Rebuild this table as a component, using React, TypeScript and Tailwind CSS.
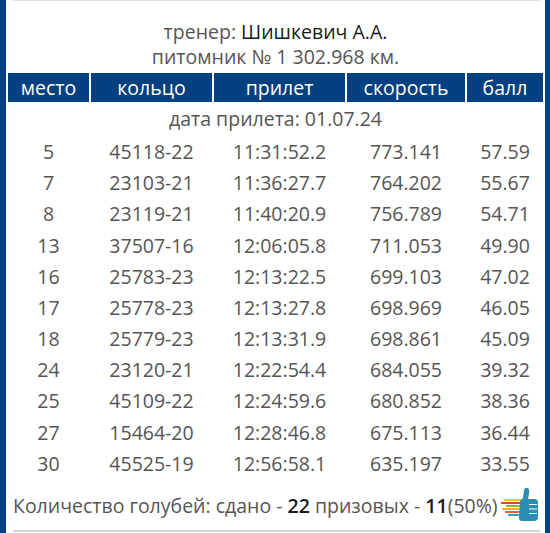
const COLS = ['место', 'кольцо', 'прилет', 'скорость', 'балл'];
const WIDTHS = ['w-[81px]', 'w-[121px]', 'w-[131px]', 'w-[118px]', 'w-[76px]'];

const ROWS = [
    ['5', '45118-22', '11:31:52.2', '773.141', '57.59'],
    ['7', '23103-21', '11:36:27.7', '764.202', '55.67'],
    ['8', '23119-21', '11:40:20.9', '756.789', '54.71'],
    ['13', '37507-16', '12:06:05.8', '711.053', '49.90'],
    ['16', '25783-23', '12:13:22.5', '699.103', '47.02'],
    ['17', '25778-23', '12:13:27.8', '698.969', '46.05'],
    ['18', '25779-23', '12:13:31.9', '698.861', '45.09'],
    ['24', '23120-21', '12:22:54.4', '684.055', '39.32'],
    ['25', '45109-22', '12:24:59.6', '680.852', '38.36'],
    ['27', '15464-20', '12:28:46.8', '675.113', '36.44'],
    ['30', '45525-19', '12:56:58.1', '635.197', '33.55'],
];

function ThumbIcon() {
    return (
        <svg width="40" height="34" viewBox="0 0 40 34" className="ml-[1px] shrink-0">
            {/* speed stripes */}
            <rect x="5" y="11" width="18" height="2" fill="#f5c518" />
            <rect x="2" y="14" width="21" height="2" fill="#e2452b" />
            <rect x="7" y="17" width="16" height="2" fill="#7cbf3a" />
            <rect x="3" y="20" width="20" height="2" fill="#f2b01e" />
            <rect x="6" y="23" width="17" height="2" fill="#e8612c" />
            <rect x="9" y="26" width="14" height="2" fill="#3a9fd0" />
            {/* thumb */}
            <path
                d="M21 13 L24 10 L25 2 Q26 -1 28.5 0 Q31 1 30 6 L29 11 L36 11 Q39.5 12 39 15 L39 29 Q39 33 35 33 L23 33 Q20 33 20 30 Z"
                fill="#2b8db3"
            />
            <path d="M30 16.5 H38 M30 21 H38 M30 25.5 H38" stroke="#ffffff" strokeWidth="1" />
        </svg>
    );
}

export default function App() {
    return (
        <div className="flex h-[533px] w-[550px] bg-white font-['Open_Sans',sans-serif] text-[19.5px] text-[#555555]">
            <div className="w-[6px] shrink-0 bg-[#034080]" />

            <div className="flex w-[539px] flex-col">
                <div className="ml-[7px] mr-[5px] h-px bg-[#dedede]" />

                <div className="mt-[18px] text-center leading-[25px]">
                    <p>
                        тренер: <span className="text-[#1a1a1a]">Шишкевич А.А.</span>
                    </p>
                    <p>питомник № 1 302.968 км.</p>
                </div>

                <div className="mx-[2px] mt-[4px]">
                    <div className="flex gap-[2px]">
                        {COLS.map((c, i) => (
                            <div key={c} className={`${WIDTHS[i]} flex h-[29px] items-center justify-center bg-[#034080] text-white`}>
                                {c}
                            </div>
                        ))}
                    </div>

                    <div className="flex h-[34px] items-center justify-center">дата прилета: 01.07.24</div>

                    {ROWS.map((row) => (
                        <div key={row[0]} className="flex h-[31.2px] gap-[2px]">
                            {row.map((cell, i) => (
                                <div key={i} className={`${WIDTHS[i]} flex items-center justify-center`}>
                                    {cell}
                                </div>
                            ))}
                        </div>
                    ))}
                </div>

                <div className="ml-[7px] mt-[9px] flex items-center leading-[25px]">
                    <span>
                        Количество голубей: сдано - <span className="font-semibold text-[#1a1a1a]">22</span> призовых -{' '}
                        <span className="font-semibold text-[#1a1a1a]">11</span>(50%)
                    </span>
                    <ThumbIcon />
                </div>

                <div className="ml-[7px] mr-[5px] mt-auto mb-[1px] h-[2px] bg-[#d6d6d6]" />
            </div>

            <div className="w-[5px] shrink-0 bg-[#034080]" />
        </div>
    );
}
